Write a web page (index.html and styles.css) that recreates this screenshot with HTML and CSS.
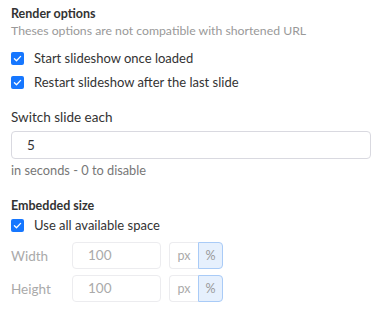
FILE: index.html
```html
<!DOCTYPE html>
<html>
<head>
<meta charset="utf-8">
<link rel="stylesheet" href="styles.css">
</head>
<body>
<div class="panel">
  <section class="group">
    <h3 class="title">Render options</h3>
    <p class="hint">Theses options are not compatible with shortened URL</p>
    <label class="check"><span class="box"><svg viewBox="0 0 13 13" width="13" height="13"><path d="M3.4 6.7l2.1 2 4.1-4.3" fill="none" stroke="#fff" stroke-width="1.3" stroke-linecap="round" stroke-linejoin="round"/></svg></span>Start slideshow once loaded</label>
    <label class="check"><span class="box"><svg viewBox="0 0 13 13" width="13" height="13"><path d="M3.4 6.7l2.1 2 4.1-4.3" fill="none" stroke="#fff" stroke-width="1.3" stroke-linecap="round" stroke-linejoin="round"/></svg></span>Restart slideshow after the last slide</label>
  </section>
  <section class="field">
    <div class="label">Switch slide each</div>
    <div class="input">5</div>
    <div class="help">in seconds - 0 to disable</div>
  </section>
  <section class="group">
    <h3 class="title">Embedded size</h3>
    <label class="check up"><span class="box"><svg viewBox="0 0 13 13" width="13" height="13"><path d="M3.4 6.7l2.1 2 4.1-4.3" fill="none" stroke="#fff" stroke-width="1.3" stroke-linecap="round" stroke-linejoin="round"/></svg></span>Use all available space</label>
    <div class="size-row">
      <span class="size-label">Width</span>
      <span class="size-input">100</span>
      <span class="unit"><span class="u">px</span><span class="u on">%</span></span>
    </div>
    <div class="size-row">
      <span class="size-label">Height</span>
      <span class="size-input">100</span>
      <span class="unit"><span class="u">px</span><span class="u on">%</span></span>
    </div>
  </section>
</div>
</body>
</html>
```
FILE: styles.css
```css
html, body { margin: 0; padding: 0; background: #fff; }
body { font-family: Lato, "Noto Sans", sans-serif; color: #333; }
.panel { padding: 6px 10px 0 11px; display: flex; flex-direction: column; }
.title { margin: 0; font-size: 12.5px; font-weight: 700; color: #333; line-height: 16px; }
.hint { margin: 1px 0 7px; font-size: 12.25px; color: #999; line-height: 16px; }
.check { display: flex; align-items: center; gap: 10px; font-size: 13px; color: #333; line-height: 24px; }
.check.up { margin-top: -1px; }
.box { width: 13px; height: 13px; border-radius: 2px; background: #1677ff; display: inline-flex; }
.field { margin-top: 14px; display: flex; flex-direction: column; }
.label { font-size: 13.5px; color: #333; line-height: 18px; }
.input { margin-top: 5px; height: 26px; border: 1px solid #d9d9e0; border-radius: 4px; font-size: 13.5px; line-height: 26px; padding-left: 15px; color: #333; }
.help { margin-top: 2px; font-size: 12.8px; color: #777; line-height: 18px; }
.field + .group { margin-top: 19px; }
.size-row { display: flex; align-items: center; margin-top: 5px; height: 27px; }
.size-row + .size-row { margin-top: 6px; }
.size-label { width: 61px; font-size: 13.5px; color: #aaa; }
.size-input { width: 89px; height: 27px; box-sizing: border-box; border: 1px solid #ececef; border-radius: 4px; font-size: 13.5px; color: #aaa; line-height: 25px; padding-left: 15px; }
.unit { margin-left: 8px; display: flex; height: 27px; }
.u { box-sizing: border-box; height: 27px; display: flex; align-items: center; justify-content: center; font-size: 12.5px; color: #aaa; border: 1px solid #ececef; }
.u:first-child { width: 29px; border-radius: 4px 0 0 4px; border-right: none; }
.u.on { width: 25px; background: #e6f0fd; border-color: #a9cbf7; border-radius: 0 4px 4px 0; color: #999; }
```
